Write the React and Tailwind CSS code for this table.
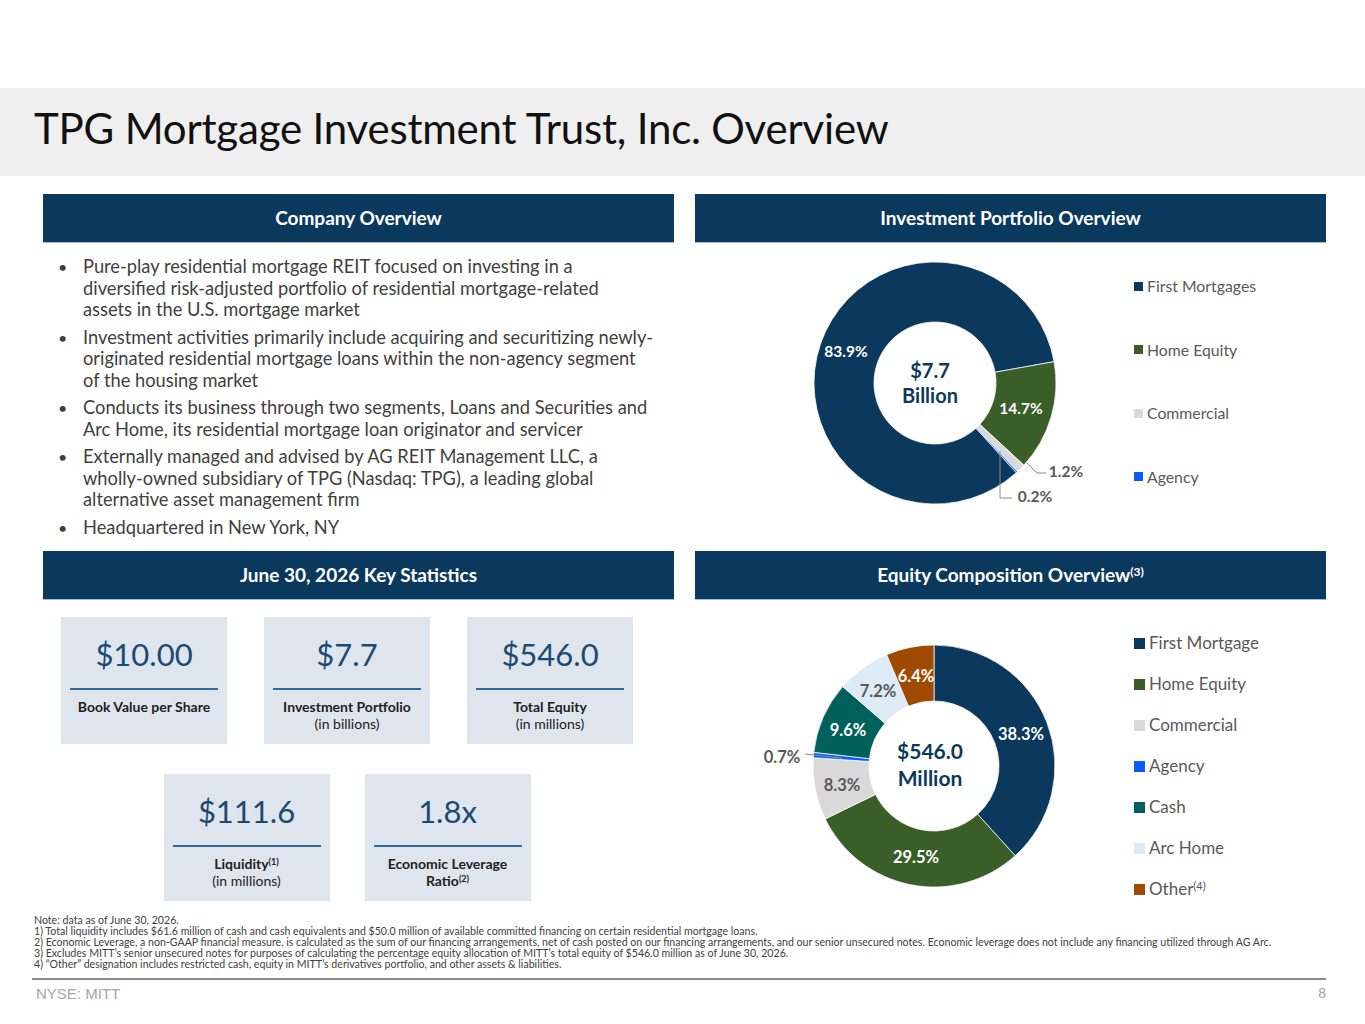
/**
 * App.jsx — MITT overview slide: company bullets, two donut charts,
 * key statistic tiles and footnotes.
 */

const NAVY = '#0b395e'

function polar(cx, cy, r, deg) {
  const a = (deg * Math.PI) / 180
  return [cx + r * Math.sin(a), cy - r * Math.cos(a)]
}

// ring slice from angle a0 to a1 (degrees clockwise from 12 o'clock)
function slicePath(cx, cy, r0, r1, a0, a1) {
  const large = a1 - a0 > 180 ? 1 : 0
  const [x1, y1] = polar(cx, cy, r1, a0)
  const [x2, y2] = polar(cx, cy, r1, a1)
  const [x3, y3] = polar(cx, cy, r0, a1)
  const [x4, y4] = polar(cx, cy, r0, a0)
  return `M${x1} ${y1} A${r1} ${r1} 0 ${large} 1 ${x2} ${y2} L${x3} ${y3} A${r0} ${r0} 0 ${large} 0 ${x4} ${y4} Z`
}

function Donut({ cx, cy, r0, r1, start, slices }) {
  let a = start
  return slices.map((s) => {
    const a0 = a
    const a1 = a + (s.pct / 100) * 360
    a = a1
    return (
      <path
        key={s.name}
        d={slicePath(cx, cy, r0, r1, a0, a1)}
        fill={s.color}
        stroke="#ffffff"
        strokeWidth="0.75"
      />
    )
  })
}

const PORTFOLIO = [
  { name: 'First Mortgages', pct: 83.9, color: NAVY },
  { name: 'Home Equity', pct: 14.7, color: '#3a5e27' },
  { name: 'Commercial', pct: 1.2, color: '#d9d9d9' },
  { name: 'Agency', pct: 0.2, color: '#0a5cff' },
]

const EQUITY = [
  { name: 'First Mortgage', pct: 38.3, color: NAVY },
  { name: 'Home Equity', pct: 29.5, color: '#3a5e27' },
  { name: 'Commercial', pct: 8.3, color: '#d9d9d9' },
  { name: 'Agency', pct: 0.7, color: '#0a5cff' },
  { name: 'Cash', pct: 9.6, color: '#00605a' },
  { name: 'Arc Home', pct: 7.2, color: '#ddebf7' },
  { name: 'Other', pct: 6.4, color: '#9e4b00', sup: '(4)' },
]

function SectionHeader({ children }) {
  return (
    <div className="h-[49px] flex items-center justify-center bg-[#0b395e] text-white font-bold text-[19px] border-b border-[#9dbbd6]">
      {children}
    </div>
  )
}

const BULLETS = [
  [
    'Pure-play residential mortgage REIT focused on investing in a',
    'diversified risk-adjusted portfolio of residential mortgage-related',
    'assets in the U.S. mortgage market',
  ],
  [
    'Investment activities primarily include acquiring and securitizing newly-',
    'originated residential mortgage loans within the non-agency segment',
    'of the housing market',
  ],
  [
    'Conducts its business through two segments, Loans and Securities and',
    'Arc Home, its residential mortgage loan originator and servicer',
  ],
  [
    'Externally managed and advised by AG REIT Management LLC, a',
    'wholly-owned subsidiary of TPG (Nasdaq: TPG), a leading global',
    'alternative asset management firm',
  ],
  ['Headquartered in New York, NY'],
]

function StatBox({ value, label, sub, sup }) {
  return (
    <div className="w-[166px] h-[127px] bg-[#dfe5ec] flex flex-col items-center pt-[18px]">
      <div className="text-[31px] leading-[38px] text-[#1b4a73]">{value}</div>
      <div className="w-[148px] h-[2px] bg-[#2f6aa0] mt-[15px]" />
      <div className="mt-[8px] text-[14px] leading-[17px] text-[#222] text-center">
        <div className="font-bold">
          {label}
          {sup && <sup className="text-[9px]">{sup}</sup>}
        </div>
        {sub && <div>{sub}</div>}
      </div>
    </div>
  )
}

function Legend({ items, gap, size, box }) {
  return (
    <div className="flex flex-col" style={{ gap }}>
      {items.map((s) => (
        <div key={s.name} className="flex items-center gap-[4px] text-[#595959]" style={{ fontSize: size, lineHeight: '20px' }}>
          <span className="inline-block shrink-0" style={{ width: box, height: box, background: s.color }} />
          <span>
            {s.name}
            {s.sup && <sup className="text-[11px]">{s.sup}</sup>}
          </span>
        </div>
      ))}
    </div>
  )
}

export default function App() {
  return (
    <div className="w-[1365px] h-[1024px] bg-white relative overflow-hidden" style={{ fontFamily: 'Lato, "Open Sans", sans-serif' }}>
      <div className="h-[88px]" />
      <div className="h-[88px] bg-[#efefef] flex items-center pl-[34px] pb-[8px]">
        <h1 className="text-[42px] text-[#111] tracking-[-0.2px]">TPG Mortgage Investment Trust, Inc. Overview</h1>
      </div>

      <div className="mt-[18px] pl-[43px] grid grid-cols-[631px_631px] gap-x-[21px]">
        {/* row 1 */}
        <SectionHeader>Company Overview</SectionHeader>
        <SectionHeader>Investment Portfolio Overview</SectionHeader>

        <div className="h-[308px] pt-[13px] pl-[15px] text-[18.3px] leading-[21.5px] text-[#3f3f3f] flex flex-col gap-[6px]">
          {BULLETS.map((lines, i) => (
            <div key={i} className="flex">
              <span className="w-[25px] shrink-0 text-[16px]">•</span>
              <div>
                {lines.map((l) => (
                  <div key={l} className="whitespace-nowrap">{l}</div>
                ))}
              </div>
            </div>
          ))}
        </div>

        <div className="h-[308px] flex">
          <svg width="439" height="308" className="shrink-0">
            <Donut cx={240} cy={140} r0={61} r1={121} start={137.8} slices={PORTFOLIO} />
            <g fontWeight="700" fontSize="15.5" textAnchor="middle">
              <text x="151" y="114" fill="#ffffff">83.9%</text>
              <text x="326" y="171" fill="#ffffff">14.7%</text>
              <text x="371" y="234" fill="#595959">1.2%</text>
              <text x="340" y="259" fill="#595959">0.2%</text>
            </g>
            <polyline points="332,220 342,230 351,230" fill="none" stroke="#8c8c8c" strokeWidth="1" />
            <polyline points="305,208 305,255 317,255" fill="none" stroke="#8c8c8c" strokeWidth="1" />
            <g fontWeight="700" fontSize="20" textAnchor="middle" fill={NAVY}>
              <text x="235" y="135">$7.7</text>
              <text x="235" y="160">Billion</text>
            </g>
          </svg>
          <div className="pt-[33px]">
            <Legend items={PORTFOLIO} gap="43.5px" size="15.8px" box="9px" />
          </div>
        </div>

        {/* row 2 */}
        <SectionHeader>June 30, 2026 Key Statistics</SectionHeader>
        <SectionHeader>
          <span>
            Equity Composition Overview<sup className="text-[12px]">(3)</sup>
          </span>
        </SectionHeader>

        <div className="h-[307px] pt-[17px] pl-[18px]">
          <div className="w-[572px] flex flex-col items-center gap-[30px]">
            <div className="flex gap-[37px]">
              <StatBox value="$10.00" label="Book Value per Share" />
              <StatBox value="$7.7" label="Investment Portfolio" sub="(in billions)" />
              <StatBox value="$546.0" label="Total Equity" sub="(in millions)" />
            </div>
            <div className="flex gap-[35px]">
              <StatBox value="$111.6" label="Liquidity" sup="(1)" sub="(in millions)" />
              <StatBox value="1.8x" label="Economic Leverage" sub={<span className="font-bold">Ratio<sup className="text-[9px]">(2)</sup></span>} />
            </div>
          </div>
        </div>

        <div className="h-[307px] flex">
          <svg width="439" height="307" className="shrink-0">
            <Donut cx={239} cy={166} r0={65} r1={121} start={0} slices={EQUITY} />
            <polyline points="110,154 147,158" fill="none" stroke="#8c8c8c" strokeWidth="1" />
            <g fontWeight="700" fontSize="16.5" textAnchor="middle">
              <text x="326" y="140" fill="#ffffff">38.3%</text>
              <text x="221" y="263" fill="#ffffff">29.5%</text>
              <text x="147" y="191" fill="#595959">8.3%</text>
              <text x="87" y="163" fill="#595959">0.7%</text>
              <text x="153" y="136" fill="#ffffff">9.6%</text>
              <text x="183" y="97" fill="#595959">7.2%</text>
              <text x="221" y="82" fill="#ffffff">6.4%</text>
            </g>
            <g fontWeight="700" fontSize="21" textAnchor="middle" fill={NAVY}>
              <text x="235" y="159">$546.0</text>
              <text x="235" y="186">Million</text>
            </g>
          </svg>
          <div className="pt-[33px]">
            <Legend items={EQUITY} gap="21px" size="17px" box="11px" />
          </div>
        </div>
      </div>

      <div className="pl-[34px] pt-[8px] text-[10.6px] leading-[11px] text-[#404040] whitespace-nowrap">
        <div>Note: data as of June 30, 2026.</div>
        <div>1) Total liquidity includes $61.6 million of cash and cash equivalents and $50.0 million of available committed financing on certain residential mortgage loans.</div>
        <div>2) Economic Leverage, a non-GAAP financial measure, is calculated as the sum of our financing arrangements, net of cash posted on our financing arrangements, and our senior unsecured notes. Economic leverage does not include any financing utilized through AG Arc.</div>
        <div>3) Excludes MITT’s senior unsecured notes for purposes of calculating the percentage equity allocation of MITT’s total equity of $546.0 million as of June 30, 2026.</div>
        <div>4) “Other” designation includes restricted cash, equity in  MITT’s derivatives portfolio, and other assets &amp; liabilities.</div>
      </div>

      <div className="ml-[32px] w-[1294px] h-[2px] bg-[#8a8a8a] mt-[8px]" />
      <div className="ml-[36px] w-[1290px] flex justify-between pt-[3px] text-[15px] text-[#a6a6a6]" style={{ fontFamily: '"Liberation Sans", Arial, sans-serif' }}>
        <span>NYSE: MITT</span>
        <span className="text-[14px]">8</span>
      </div>
    </div>
  )
}
